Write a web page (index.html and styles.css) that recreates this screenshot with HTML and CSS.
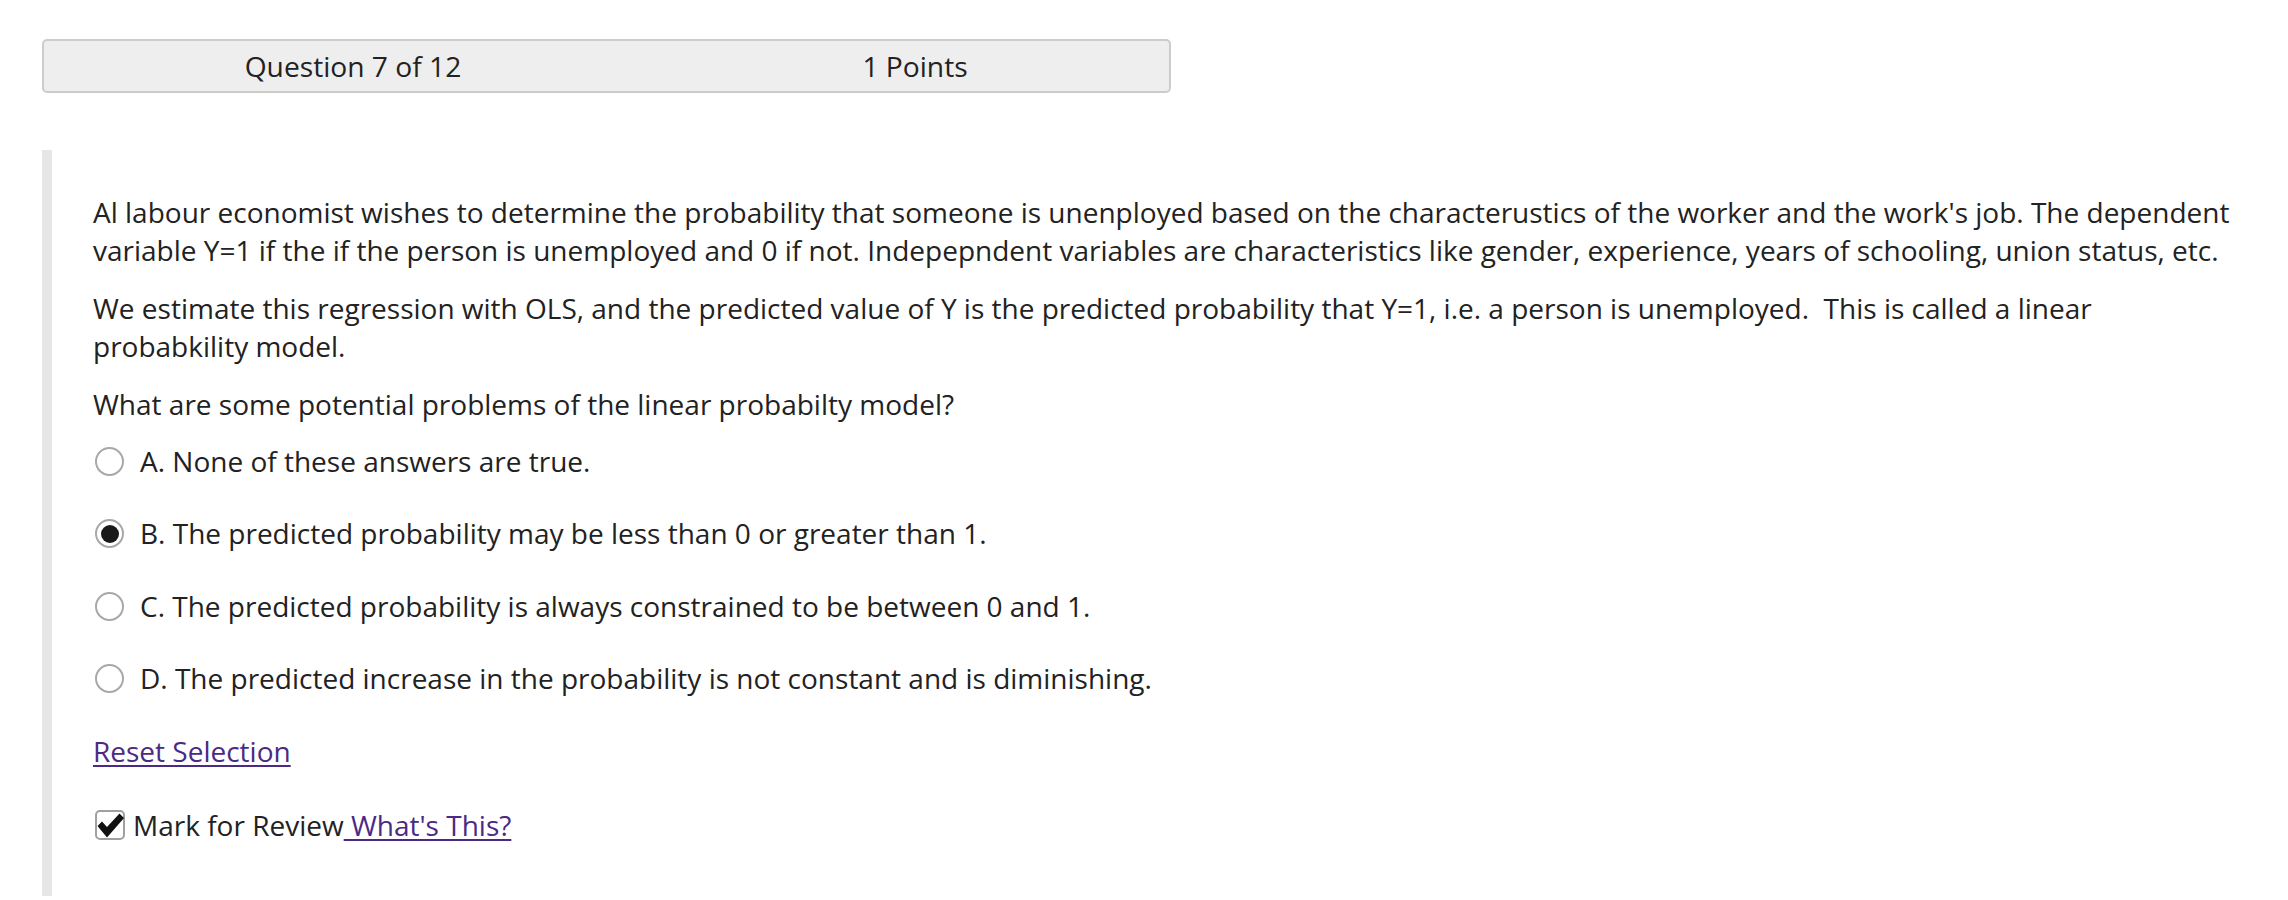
FILE: index.html
```html
<!DOCTYPE html>
<html lang="en">
<head>
<meta charset="utf-8">
<title>Question 7 of 12</title>
<link rel="stylesheet" href="styles.css">
</head>
<body>
<div class="qheader">
  <div class="qheader-cell">Question 7 of 12</div>
  <div class="qheader-cell">1 Points</div>
</div>

<div class="question">
  <p class="para">Al labour economist wishes to determine the probability that someone is unenployed based on the characterustics of the worker and the work's job. The dependent variable Y=1 if the if the person is unemployed and 0 if not. Indepepndent variables are characteristics like gender, experience, years of schooling, union status, etc.</p>
  <p class="para">We estimate this regression with OLS, and the predicted value of Y is the predicted probability that Y=1, i.e. a person is unemployed.&nbsp; This is called a linear probabkility model.</p>
  <p class="para">What are some potential problems of the linear probabilty model?</p>

  <div class="options">
    <label class="option"><span class="radio"></span><span>A. None of these answers are true.</span></label>
    <label class="option"><span class="radio radio-on"></span><span>B. The predicted probability may be less than 0 or greater than 1.</span></label>
    <label class="option"><span class="radio"></span><span>C. The predicted probability is always constrained to be between 0 and 1.</span></label>
    <label class="option"><span class="radio"></span><span>D. The predicted increase in the probability is not constant and is diminishing.</span></label>
  </div>

  <a class="link reset" href="#">Reset Selection</a>

  <div class="review">
    <span class="checkbox">
      <svg viewBox="0 0 30 30" width="30" height="30" aria-hidden="true">
        <path d="M2.5 16 L7 11.5 L12 17 L24.5 3.5 L29 8 L12 27.5 Z" fill="#111"/>
      </svg>
    </span>
    <span>Mark for Review</span><a class="link" href="#">&nbsp;What's This?</a>
  </div>
</div>
</body>
</html>
```

FILE: styles.css
```css
html, body {
  margin: 0;
  padding: 0;
  background: #ffffff;
}

body {
  font-family: "Open Sans", "Noto Sans", sans-serif;
  font-size: 28px;
  line-height: 38.4px;
  color: #222222;
}

.qheader {
  margin: 39px 0 0 42px;
  width: 1129px;
  height: 54px;
  box-sizing: border-box;
  border: 2px solid #cccccc;
  border-radius: 5px;
  background: #eeeeee;
  display: grid;
  grid-template-columns: 562px 562px;
  padding-left: 28px;
  align-items: center;
}

.qheader-cell {
  text-align: center;
  white-space: nowrap;
  font-size: 28.2px;
}

.question {
  margin: 57px 0 0 42px;
  border-left: 10px solid #e6e6e6;
  padding: 43px 50px 30px 41px;
  box-sizing: border-box;
  min-height: 746px;
}

.para {
  margin: 0 0 19px 0;
}

.options {
  display: flex;
  flex-direction: column;
  gap: 34px;
  margin-top: 19px;
}

.option {
  display: flex;
  align-items: center;
  gap: 16px;
  padding-left: 2px;
}

.radio {
  width: 29px;
  height: 29px;
  box-sizing: border-box;
  border: 2px solid #a8a8a8;
  border-radius: 50%;
  background: #ffffff;
  flex: none;
  display: flex;
  align-items: center;
  justify-content: center;
}

.radio-on::after {
  content: "";
  width: 18px;
  height: 18px;
  border-radius: 50%;
  background: #1a1a1a;
}

.link {
  color: #4b2a85;
  text-decoration: underline;
  text-underline-offset: 3px;
}

.reset {
  display: inline-block;
  margin-top: 34px;
}

.review {
  display: flex;
  align-items: center;
  margin-top: 36px;
  padding-left: 2px;
}

.checkbox {
  width: 30px;
  height: 30px;
  box-sizing: border-box;
  border: 2px solid #a0a0a0;
  border-radius: 5px;
  background: #ffffff;
  margin-right: 8px;
  position: relative;
  flex: none;
}

.checkbox svg {
  position: absolute;
  left: -2px;
  top: -2px;
}
```
